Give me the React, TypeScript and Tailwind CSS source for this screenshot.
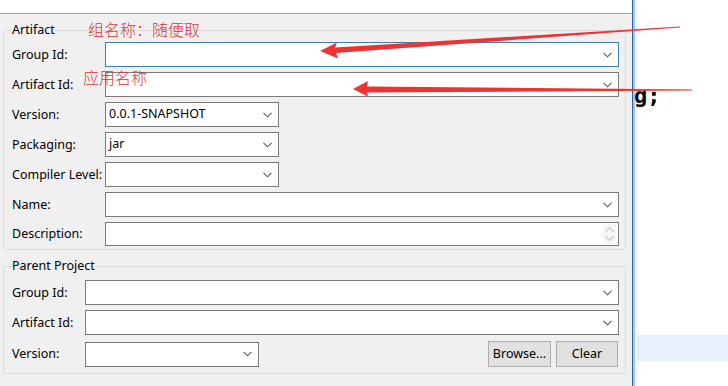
import React from "react";

const FONT = { fontFamily: '"Noto Sans", "Noto Sans CJK SC", sans-serif' };

function Chevron() {
  return (
    <svg width="9" height="6" viewBox="0 0 9 6" className="shrink-0">
      <polyline points="0.5,0.8 4.5,4.8 8.5,0.8" fill="none" stroke="#5a5a5a" strokeWidth="1.1" />
    </svg>
  );
}

function Spinner() {
  return (
    <div className="w-[13px] h-[20px] bg-[#f6f6f6] flex flex-col items-center justify-center gap-[4px] mr-[2px]">
      <svg width="9" height="5" viewBox="0 0 9 5">
        <polyline points="0.5,4.5 4.5,0.8 8.5,4.5" fill="none" stroke="#c4c4c4" strokeWidth="1.1" />
      </svg>
      <svg width="9" height="5" viewBox="0 0 9 5">
        <polyline points="0.5,0.5 4.5,4.2 8.5,0.5" fill="none" stroke="#c4c4c4" strokeWidth="1.1" />
      </svg>
    </div>
  );
}

function Row({ label, labelW, children }: { label: string; labelW: string; children: React.ReactNode }) {
  return (
    <div className="flex items-center">
      <div className={`${labelW} shrink-0 text-[12.5px] leading-[16px] text-black`}>{label}</div>
      {children}
    </div>
  );
}

function Combo({ value, cls }: { value?: string; cls: string }) {
  return (
    <div className={`${cls} h-[25px] bg-white flex items-center justify-between pl-[3px] pr-[6px] text-[12.5px] text-black`}>
      <span>{value ?? ""}</span>
      <Chevron />
    </div>
  );
}

export default function App() {
  return (
    <div className="w-[728px] h-[386px] bg-white overflow-hidden relative flex" style={FONT}>
      {/* dialog panel */}
      <div className="w-[632px] shrink-0 flex flex-col relative z-10 shadow-[3px_0_8px_rgba(0,0,0,0.10)]">
        <div className="h-[14px] bg-white border-b border-[#a0a0a0]" />
        <div className="flex-1 bg-[#f0f0f0] flex flex-col">
          {/* Artifact group */}
          <fieldset className="mt-[8px] ml-[3px] w-[623px] min-w-0 border border-[#dcdcdc] rounded-[2px] pt-[4px] pb-[3px] pl-[8px] pr-[6px]">
            <legend className="ml-0 px-0 text-[12.5px] leading-[16px] text-black">Artifact</legend>
            <div className="flex flex-col gap-[5px]">
              <Row label="Group Id:" labelW="w-[93px]">
                <Combo cls="w-[514px] border border-[#3c7fb1]" />
              </Row>
              <Row label="Artifact Id:" labelW="w-[93px]">
                <Combo cls="w-[514px] border border-[#7a7a7a]" />
              </Row>
              <Row label="Version:" labelW="w-[93px]">
                <Combo cls="w-[174px] border border-[#7a7a7a]" value="0.0.1-SNAPSHOT" />
              </Row>
              <Row label="Packaging:" labelW="w-[93px]">
                <Combo cls="w-[174px] border border-[#7a7a7a]" value="jar" />
              </Row>
              <Row label="Compiler Level:" labelW="w-[93px]">
                <Combo cls="w-[174px] border border-[#7a7a7a]" />
              </Row>
              <Row label="Name:" labelW="w-[93px]">
                <Combo cls="w-[514px] border border-[#7a7a7a]" />
              </Row>
              <Row label="Description:" labelW="w-[93px]">
                <div className="w-[514px] h-[24px] border border-[#7a7a7a] bg-white flex items-center justify-end">
                  <Spinner />
                </div>
              </Row>
            </div>
          </fieldset>

          {/* Parent Project group */}
          <fieldset className="mt-[8px] ml-[3px] w-[623px] min-w-0 border border-[#dcdcdc] rounded-[2px] pt-[6px] pb-[6px] pl-[8px] pr-[6px]">
            <legend className="ml-0 px-0 text-[12.5px] leading-[16px] text-black">Parent Project</legend>
            <div className="flex flex-col gap-[5px]">
              <Row label="Group Id:" labelW="w-[73px]">
                <Combo cls="w-[534px] border border-[#7a7a7a]" />
              </Row>
              <Row label="Artifact Id:" labelW="w-[73px]">
                <Combo cls="w-[534px] border border-[#7a7a7a]" />
              </Row>
              <div className="mt-[1px]">
                <Row label="Version:" labelW="w-[73px]">
                  <Combo cls="w-[174px] border border-[#7a7a7a]" />
                  <div className="ml-auto mr-[1px] flex gap-[5px]">
                    <button className="w-[63px] h-[26px] bg-[#e1e1e1] border border-[#adadad] text-[12.5px] text-black">
                      Browse...
                    </button>
                    <button className="w-[62px] h-[26px] bg-[#e1e1e1] border border-[#adadad] text-[12.5px] text-black">
                      Clear
                    </button>
                  </div>
                </Row>
              </div>
            </div>
          </fieldset>
        </div>
      </div>

      {/* window edge */}
      <div className="w-[1px] shrink-0 bg-[#2f62a0] relative z-10" />
      <div className="w-[2px] shrink-0 bg-[#a6c6ea] relative z-10" />

      {/* background editor */}
      <div className="flex-1 flex flex-col bg-white">
        <div
          className="pt-[83px] -ml-[1px] text-[22px] leading-[26px] font-bold text-black"
          style={{ fontFamily: '"DejaVu Sans Mono", monospace' }}
        >
          g;
        </div>
        <div className="mt-[226px] ml-[2px] h-[26px] bg-[#e8f0fb]" />
      </div>

      {/* annotations */}
      <div
        className="absolute left-[88px] top-[19px] z-20 text-[16px] leading-[20px] font-light text-[#e0353a]"
        style={{ fontFamily: '"Noto Sans CJK SC", sans-serif' }}
      >
        组名称：随便取
      </div>
      <div
        className="absolute left-[83px] top-[67px] z-20 text-[16px] leading-[20px] font-light text-[#e0353a]"
        style={{ fontFamily: '"Noto Sans CJK SC", sans-serif' }}
      >
        应用名称
      </div>
      <svg className="absolute left-0 top-0 z-20 pointer-events-none" width="728" height="386" viewBox="0 0 728 386">
        <polygon
          points="320,51 337,42.5 335,47.5 680,26.5 680,27.6 336,53 338,58.5"
          fill="#ec3434"
        />
        <polygon
          points="353,89 368,81 367,86.5 692,89.5 692,90.6 367,92.5 368,96.5"
          fill="#ec3434"
        />
      </svg>
    </div>
  );
}
